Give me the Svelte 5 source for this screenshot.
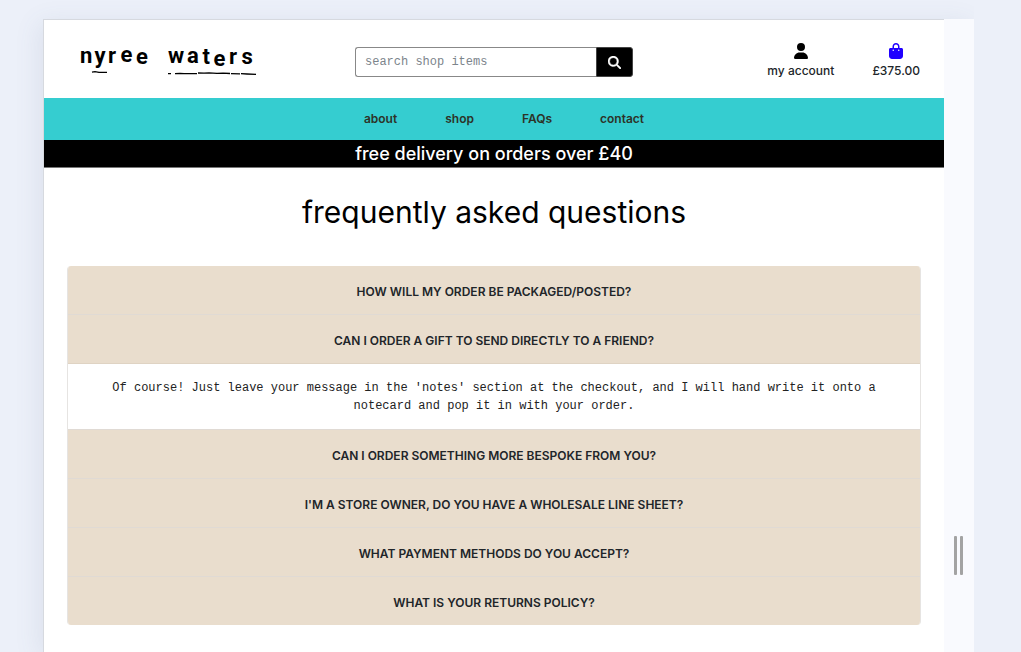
<script>
  const links = ['about', 'shop', 'FAQs', 'contact'];
  const questions = [
    { q: 'How will my order be packaged/posted?', a: 'Your order is wrapped by hand and posted in a recyclable box.' },
    {
      q: 'Can I order a gift to send directly to a friend?',
      a: "Of course! Just leave your message in the 'notes' section at the checkout, and I will hand write it onto a notecard and pop it in with your order."
    },
    { q: 'Can I order something more bespoke from you?', a: 'Yes, please get in touch through the contact page.' },
    { q: "I'm a store owner, do you have a wholesale line sheet?", a: 'Yes, please get in touch through the contact page.' },
    { q: 'What payment methods do you accept?', a: 'All major cards are accepted at the checkout.' },
    { q: 'What is your returns policy?', a: 'Please get in touch through the contact page.' }
  ];
  let open = $state(1);
  let search = $state('');
</script>

<div class="frame">
  <div class="site">
    <header>
      <a class="logo" href="#home" aria-label="nyree waters">
        <svg width="180" height="36" viewBox="0 0 180 36">
          <text x="3 17.500 31 43.500 59 91 110 125.500 136.500 152 164.500" y="22.300 22.300 21.700 20.700 22.700 22.300 22.300 23.300 24.700 22.700 22.700">nyreewaters</text>
          <path d="M15 31.200l3-.5 4 .6 8 .1M91 32.600h3M98 32.600l5-.3 4 .4h13M121 32l6 .2 5-.3 8 .5 6-.3 7 .4M154 32.600l9 .2M164 32.700l6 .3 9 .3" />
        </svg>
      </a>
      <form class="search" role="search" onsubmit={(e) => e.preventDefault()}>
        <input type="search" aria-label="search shop items" placeholder="search shop items" bind:value={search} />
        <button aria-label="search">
          <svg width="13" height="13" viewBox="0 0 512 512"><path d="M416 208c0 46-15 88-40 123l127 126c12 13 12 33 0 46s-33 12-46 0L331 376c-35 25-77 40-123 40C93 416 0 323 0 208S93 0 208 0s208 93 208 208zM208 352a144 144 0 1 0 0-288 144 144 0 1 0 0 288z" /></svg>
        </button>
      </form>
      <div class="tools">
        <a href="#account">
          <svg width="14" height="16" viewBox="0 0 448 512"><path d="M224 256a128 128 0 1 0 0-256 128 128 0 1 0 0 256zm-46 48C80 304 0 384 0 482c0 17 13 30 30 30h388c17 0 30-13 30-30 0-98-80-178-178-178z" /></svg>
          my account
        </a>
        <a href="#bag">
          <svg class="bag" width="14" height="16" viewBox="0 0 448 512"><path d="M160 112c0-35 29-64 64-64s64 29 64 64v48H160zm-48 48H48c-27 0-48 21-48 48v208c0 53 43 96 96 96h256c53 0 96-43 96-96V208c0-27-21-48-48-48h-64v-48C336 50 286 0 224 0S112 50 112 112zm24 48a24 24 0 1 1 0 48 24 24 0 1 1 0-48zm152 24a24 24 0 1 1 48 0 24 24 0 1 1-48 0z" /></svg>
          £375.00
        </a>
      </div>
    </header>
    <nav>
      {#each links as link}
        <a href="#{link}">{link}</a>
      {/each}
    </nav>
    <p class="banner">free delivery on orders over £40</p>
    <main>
      <h1>frequently asked questions</h1>
      <div class="accordion">
        {#each questions as item, i}
          <section>
            <h2>
              <button aria-expanded={open === i} onclick={() => (open = open === i ? -1 : i)}>{item.q}</button>
            </h2>
            {#if open === i}
              <p>{item.a}</p>
            {/if}
          </section>
        {/each}
      </div>
    </main>
  </div>
  <div class="handle" role="separator" aria-orientation="vertical"><i></i><i></i></div>
</div>

<style>
  :global(body) {
    background: #ecf0f9;
  }
  * {
    box-sizing: border-box;
  }
  .frame {
    display: flex;
    min-height: calc(100vh - 19px);
    margin: 19px 47px 0 43px;
    box-shadow: -4px 4px 24px rgba(80, 100, 130, 0.1);
    font-family: Inter, sans-serif;
    background: #f9fafe;
    clip-path: inset(-19px 0 0 -43px);
  }
  .site {
    flex: 1;
    border-top: 1px solid #d6d9df;
    border-left: 1px solid #d6d9df;
    background: #fff;
  }
  a {
    color: #212529;
    text-decoration: none;
  }
  header {
    display: grid;
    grid-template-columns: 1fr 278px 1fr;
    align-items: center;
    height: 78px;
    padding: 0 23px;
  }
  .logo {
    padding-left: 10px;
  }
  .logo,
  .logo svg {
    display: block;
  }
  .logo text {
    font: bold 22px Roboto, sans-serif;
    fill: #000;
  }
  .logo path {
    fill: none;
    stroke: #000;
    stroke-width: 1.3;
  }
  .search {
    display: flex;
    height: 30px;
    margin-top: 6px;
  }
  .search input {
    flex: 1;
    min-width: 0;
    padding: 0 9px;
    border: 1px solid #888;
    border-right: 0;
    border-radius: 3px 0 0 3px;
    outline: 0;
    font: 12px 'Liberation Mono', monospace;
    appearance: none;
  }
  .search input::placeholder {
    color: #7c848b;
  }
  .search button {
    display: grid;
    place-items: center;
    width: 37px;
    padding: 0;
    border: 1px solid #444;
    border-radius: 0 3px 3px 0;
    background: #000;
    fill: #fff;
    stroke: #fff;
    stroke-width: 16px;
  }
  .tools {
    display: flex;
    justify-content: flex-end;
    gap: 38px;
    padding: 4px 1px 0 0;
  }
  .tools a {
    display: flex;
    flex-direction: column;
    align-items: center;
    gap: 4px;
    font-size: 12px;
    font-weight: 500;
    line-height: 16px;
  }
  .bag {
    fill: #2000ff;
  }
  nav {
    display: flex;
    justify-content: center;
    align-items: center;
    gap: 48px;
    height: 42px;
    padding: 0 0 2px 20px;
    background: #35cdd0;
    font-size: 12px;
    font-weight: 600;
  }
  nav a {
    color: #2d3328;
  }
  .banner {
    margin: 0;
    border-bottom: 1px solid #777;
    background: #000;
    color: #fff;
    font-size: 18px;
    font-weight: 500;
    line-height: 27px;
    text-align: center;
  }
  main {
    padding: 23px;
  }
  h1 {
    margin: 0 0 33px;
    color: #000;
    font-size: 30px;
    font-weight: 400;
    line-height: 42px;
    text-align: center;
  }
  .accordion {
    overflow: hidden;
    border: 1px solid #e6e4e2;
    border-width: 0 1px;
    border-radius: 4px;
  }
  section + section {
    border-top: 1px solid #e0dad4;
  }
  h2 {
    margin: 0;
  }
  h2 button {
    display: block;
    width: 100%;
    height: 48px;
    padding: 2px 0 0;
    border: 0;
    background: #e9ddcd;
    color: #212529;
    font: 600 12px Inter, sans-serif;
    text-transform: uppercase;
  }
  section p {
    margin: 0;
    padding: 15px 40px 14px;
    border-top: 1px solid #dfd3c3;
    color: #222;
    font: 12px/18px 'Liberation Mono', monospace;
    text-align: center;
  }
  .handle {
    display: flex;
    justify-content: center;
    gap: 3px;
    width: 30px;
    padding: 517px 1px 0 0;
  }
  .handle i {
    width: 3px;
    height: 39px;
    border-radius: 1px;
    background: #a3a3a3;
  }
</style>
